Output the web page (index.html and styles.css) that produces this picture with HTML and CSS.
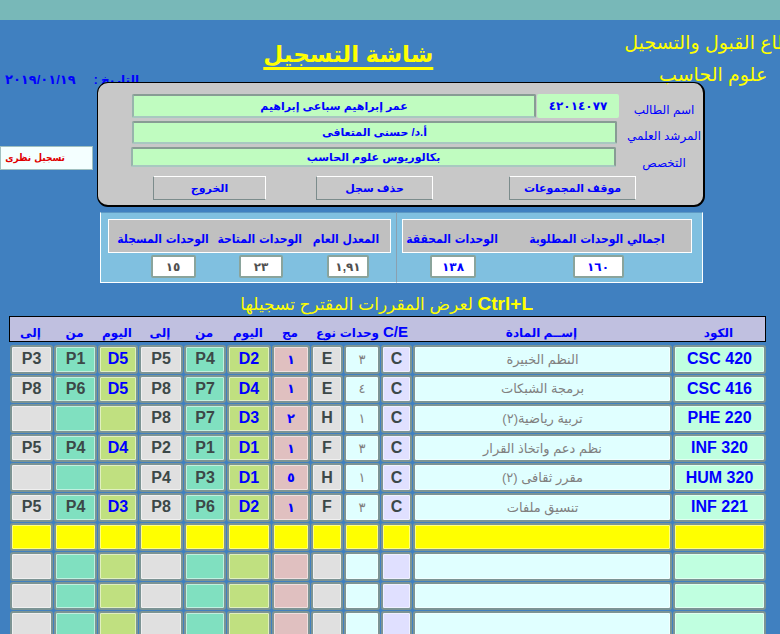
FILE: index.html
```html
<!DOCTYPE html>
<html lang="ar" dir="rtl">
<head>
<meta charset="utf-8">
<title>شاشة التسجيل</title>
<link rel="stylesheet" href="styles.css">
</head>
<body>
<div class="topbar"></div>
<header class="head">
  <div class="org">
    <div class="org-line">قطاع القبول والتسجيل</div>
    <div class="org-line">علوم الحاسب</div>
  </div>
  <h1 class="title">شاشة التسجيل</h1>
  <div class="dateblock">
    <span class="date-label">التاريخ :</span>
    <span class="date-value" dir="ltr">٢٠١٩/٠١/١٩</span>
  </div>
</header>

<div class="main">
  <section class="panel">
    <div class="prow prow-1">
      <div class="plabel">اسم الطالب</div>
      <div class="fields">
        <div class="field field-id">٤٢٠١٤٠٧٧</div>
        <div class="field field-name">عمر إبراهيم سباعى إبراهيم</div>
      </div>
    </div>
    <div class="prow prow-2">
      <div class="plabel">المرشد العلمي</div>
      <div class="fields">
        <div class="field field-wide">أ.د/ حسنى المتعافى</div>
      </div>
    </div>
    <div class="prow prow-3">
      <div class="plabel plabel-low">التخصص</div>
      <div class="fields">
        <div class="field field-wide">بكالوريوس علوم الحاسب</div>
      </div>
    </div>
    <div class="buttons">
      <button class="btn btn-groups">موقف المجموعات</button>
      <button class="btn btn-delete">حذف سجل</button>
      <button class="btn btn-exit">الخروج</button>
    </div>
  </section>
  <div class="side-input">تسجيل نظرى</div>
</div>

<div class="stats">
  <div class="stat stat-right">
    <div class="stat-head cols-right">
      <div>اجمالي الوحدات المطلوبة</div>
      <div>الوحدات المحققة</div>
    </div>
    <div class="stat-vals cols-right">
      <div class="vbox vbox-blue v-160">١٦٠</div>
      <div class="vbox vbox-blue v-138">١٣٨</div>
    </div>
  </div>
  <div class="stat stat-left">
    <div class="stat-head cols-left">
      <div>المعدل العام</div>
      <div>الوحدات المتاحة</div>
      <div>الوحدات المسجلة</div>
    </div>
    <div class="stat-vals cols-left">
      <div class="vbox v-191">١,٩١</div>
      <div class="vbox v-23">٢٣</div>
      <div class="vbox v-15">١٥</div>
    </div>
  </div>
</div>

<p class="hint"><b class="hint-key">Ctrl+L</b> لعرض المقررات المقترح تسجيلها</p>

<div class="table">
  <div class="thead cols">
    <div>الكود</div><div>إســم المادة</div><div class="th-ce">C/E</div><div>وحدات</div><div>نوع</div><div>مج</div><div>اليوم</div><div>من</div><div>إلى</div><div>اليوم</div><div>من</div><div>إلى</div>
  </div>
  <div class="tbody cols">
    <div class="c code">CSC 420</div><div class="c name">النظم الخبيرة</div><div class="c ce">C</div><div class="c units">٣</div><div class="c type">E</div><div class="c grp">١</div><div class="c day">D2</div><div class="c from">P4</div><div class="c to">P5</div><div class="c day">D5</div><div class="c from">P1</div><div class="c to">P3</div>

    <div class="c code">CSC 416</div><div class="c name">برمجة الشبكات</div><div class="c ce">C</div><div class="c units">٤</div><div class="c type">E</div><div class="c grp">١</div><div class="c day">D4</div><div class="c from">P7</div><div class="c to">P8</div><div class="c day">D5</div><div class="c from">P6</div><div class="c to">P8</div>

    <div class="c code">PHE 220</div><div class="c name">تربية رياضية(٢)</div><div class="c ce">C</div><div class="c units">١</div><div class="c type">H</div><div class="c grp">٢</div><div class="c day">D3</div><div class="c from">P7</div><div class="c to">P8</div><div class="c day"></div><div class="c from"></div><div class="c to"></div>

    <div class="c code">INF 320</div><div class="c name">نظم دعم واتخاذ القرار</div><div class="c ce">C</div><div class="c units">٣</div><div class="c type">F</div><div class="c grp">١</div><div class="c day">D1</div><div class="c from">P1</div><div class="c to">P2</div><div class="c day">D4</div><div class="c from">P4</div><div class="c to">P5</div>

    <div class="c code">HUM 320</div><div class="c name">مقرر ثقافى (٢)</div><div class="c ce">C</div><div class="c units">١</div><div class="c type">H</div><div class="c grp">٥</div><div class="c day">D1</div><div class="c from">P3</div><div class="c to">P4</div><div class="c day"></div><div class="c from"></div><div class="c to"></div>

    <div class="c code">INF 221</div><div class="c name">تنسيق ملفات</div><div class="c ce">C</div><div class="c units">٣</div><div class="c type">F</div><div class="c grp">١</div><div class="c day">D2</div><div class="c from">P6</div><div class="c to">P8</div><div class="c day">D3</div><div class="c from">P4</div><div class="c to">P5</div>

    <div class="c yel"></div><div class="c yel"></div><div class="c yel"></div><div class="c yel"></div><div class="c yel"></div><div class="c yel"></div><div class="c yel"></div><div class="c yel"></div><div class="c yel"></div><div class="c yel"></div><div class="c yel"></div><div class="c yel"></div>

    <div class="c code"></div><div class="c name"></div><div class="c ce"></div><div class="c units"></div><div class="c type"></div><div class="c grp"></div><div class="c day"></div><div class="c from"></div><div class="c to"></div><div class="c day"></div><div class="c from"></div><div class="c to"></div>

    <div class="c code"></div><div class="c name"></div><div class="c ce"></div><div class="c units"></div><div class="c type"></div><div class="c grp"></div><div class="c day"></div><div class="c from"></div><div class="c to"></div><div class="c day"></div><div class="c from"></div><div class="c to"></div>

    <div class="c code"></div><div class="c name"></div><div class="c ce"></div><div class="c units"></div><div class="c type"></div><div class="c grp"></div><div class="c day"></div><div class="c from"></div><div class="c to"></div><div class="c day"></div><div class="c from"></div><div class="c to"></div>
  </div>
</div>
</body>
</html>
```

FILE: styles.css
```css
html, body {
  margin: 0;
  padding: 0;
}
body {
  width: 780px;
  height: 634px;
  overflow: hidden;
  background: #4080C0;
  font-family: "Liberation Sans", "DejaVu Sans", sans-serif;
  color: #0000FF;
}

.topbar {
  height: 20px;
  background: #78B8B8;
}

/* header */
.head {
  display: flex;
  align-items: flex-start;
  height: 62px;
}
.org {
  position: relative;
  z-index: 2;
  flex: 0 0 176px;
  margin-right: -22px;
  text-align: center;
  color: #FFFF00;
  font-size: 19px;
  line-height: 32px;
  padding-top: 7px;
  white-space: nowrap;
}
.title {
  flex: 0 0 300px;
  margin: 0 126px 0 0;
  padding-top: 19px;
  text-align: center;
  font-size: 23px;
  line-height: 30px;
  font-weight: bold;
  color: #FFFF00;
  text-decoration: underline;
  text-decoration-thickness: 3px;
  text-underline-offset: 5px;
}
.dateblock {
  margin-right: auto;
  display: flex;
  gap: 18px;
  padding: 53px 0 0 5px;
  font-size: 12px;
  font-weight: bold;
  line-height: 14px;
  color: #0000FF;
}
.date-value {
  font-size: 13px;
  letter-spacing: 1.5px;
}

/* main panel */
.main {
  display: flex;
  align-items: flex-start;
  gap: 4px;
  padding-right: 75px;
}
.panel {
  position: relative;
  z-index: 1;
  box-sizing: border-box;
  width: 608px;
  height: 125px;
  background: #C8C8C8;
  border: 1px solid #000;
  border-right-width: 2px;
  border-bottom-width: 2px;
  border-radius: 11px;
  padding-top: 11px;
}
.prow {
  display: flex;
  align-items: center;
  margin-bottom: 3px;
}
.prow-1 { height: 24px; }
.prow-2 { height: 23px; }
.prow-3 { height: 20px; }
.plabel {
  flex: 0 0 84px;
  text-align: center;
  font-size: 12px;
  padding-top: 7px;
  padding-left: 6px;
  box-sizing: border-box;
  color: #0000FF;
  white-space: nowrap;
}
.plabel-low { padding-top: 12px; }
.fields {
  display: flex;
  gap: 1px;
  width: 487px;
  height: 100%;
}
.field {
  box-sizing: border-box;
  height: 100%;
  background: #C0FCC0;
  border: 2px solid #889C94;
  border-bottom-color: #A8C8C0;
  border-left-color: #98B4AC;
  border-radius: 2px;
  display: flex;
  align-items: center;
  justify-content: center;
  font-size: 11px;
  font-weight: bold;
  color: #0000FF;
  white-space: nowrap;
}
.field-id {
  flex: 0 0 82px;
  border-color: #C0FCC0;
  letter-spacing: 3px;
  font-size: 12px;
}
.field-name { flex: 0 0 404px; }
.field-wide { flex: 0 0 485px; margin-right: 2px; }
.prow-3 .field-wide { margin-right: 3px; }

.buttons {
  display: flex;
  padding-right: 67px;
  margin-top: 9px;
}
.btn {
  box-sizing: border-box;
  height: 24px;
  background: #C8C8C8;
  border: 1px solid #7C8C8C;
  border-top-color: #FFFFFF;
  border-right-color: #FFFFFF;
  font-family: "Liberation Sans", "DejaVu Sans", sans-serif;
  font-size: 11px;
  font-weight: bold;
  color: #0000FF;
  padding: 0;
}
.btn-groups { width: 127px; }
.btn-delete { width: 117px; margin-right: 76px; }
.btn-exit { width: 113px; margin-right: 50px; }

.side-input {
  box-sizing: border-box;
  width: 93px;
  height: 24px;
  margin-top: 64px;
  background: #F4FFFF;
  border: 1px solid #A0C0C0;
  padding-right: 27px;
  font-family: "DejaVu Sans Condensed", "DejaVu Sans", sans-serif;
  font-size: 10px;
  font-weight: bold;
  line-height: 22px;
  color: #E00000;
  white-space: nowrap;
  overflow: hidden;
}

/* stats */
.stats {
  display: flex;
  margin: 5px 77px 0 0;
  height: 71px;
}
.stat {
  box-sizing: border-box;
  background: #80C0E0;
  border: 1px solid #FFFFFF;
  border-top-color: #5C98C4;
  padding-top: 6px;
}
.stat-right {
  width: 307px;
  padding-right: 10px;
  padding-left: 5px;
  border-left-color: #8AA0B0;
}
.stat-left {
  width: 296px;
  padding-right: 5px;
  padding-left: 7px;
  border-right: 0;
}
.stat-head {
  display: grid;
  box-sizing: border-box;
  height: 34px;
  background: #C0C0C0;
  border: 1px solid #FFFFFF;
  align-items: center;
  padding-top: 6px;
  font-family: "DejaVu Sans Condensed", "DejaVu Sans", sans-serif;
  font-size: 12px;
  font-weight: bold;
  color: #0000FF;
  text-align: center;
  white-space: nowrap;
}
.cols-right { grid-template-columns: 188px 102px; }
.cols-left { grid-template-columns: 88px 84px 110px; }
.stat-vals {
  display: grid;
  margin-top: 2px;
  justify-items: center;
}
.vbox {
  box-sizing: border-box;
  height: 23px;
  background: #FFFFFF;
  border: 2px solid #8AA49C;
  border-radius: 2px;
  display: flex;
  align-items: center;
  justify-content: center;
  font-size: 12px;
  font-weight: bold;
  color: #505050;
  letter-spacing: 2px;
}
.vbox-blue { color: #0000FF; }
.v-160 { width: 51px; }
.v-138 { width: 46px; }
.v-191 { width: 42px; margin-left: 2px; }
.v-23 { width: 44px; }
.v-15 { width: 45px; margin-left: 18px; }

/* hint */
.hint {
  margin: 10px 0 0 0;
  padding-right: 247px;
  height: 21px;
  font-size: 17px;
  line-height: 21px;
  color: #FFFF00;
  white-space: nowrap;
}
.hint-key {
  font-weight: bold;
  font-size: 19px;
}

/* table */
.table {
  width: 756px;
  margin: 2px 14px 0 0;
}
.cols {
  display: grid;
  grid-template-columns: 93px 259px 31px 36px 32px 38px 44px 42px 44px 40px 43px 43px;
  column-gap: 1px;
}
.thead {
  box-sizing: border-box;
  height: 26px;
  margin-left: -1px;
  background: #C0C0E0;
  border: 1px solid #000;
  align-items: end;
  font-size: 12px;
  font-weight: bold;
  color: #0000FF;
  text-align: center;
  white-space: nowrap;
  padding-bottom: 1px;
}
.th-ce {
  font-size: 15px;
  direction: ltr;
}
.tbody {
  margin-top: 3px;
  grid-auto-rows: 28.6px;
  row-gap: 1px;
}
.c {
  box-sizing: border-box;
  border: 2px solid #7C9494;
  border-radius: 3px;
  box-shadow: inset 0 0 0 1px rgba(255, 255, 255, 0.5);
  display: flex;
  align-items: center;
  justify-content: center;
  font-size: 16px;
  font-weight: bold;
  color: #3C4848;
  white-space: nowrap;
  overflow: hidden;
}
.code { background: #C0FFE0; color: #0000FF; }
.name { background: #E0FFFF; color: #808080; font-weight: normal; font-size: 13px; }
.ce { background: #E0E0FF; }
.units { background: #E0FFFF; color: #808080; font-weight: normal; font-size: 13px; }
.type { background: #E0E0E0; }
.grp { background: #E0C0C0; color: #0000FF; font-size: 13px; }
.day { background: #C0E080; color: #0000FF; }
.from { background: #80E0C0; }
.to { background: #E0E0E0; }
.yel { background: #FFFF00; }
```
